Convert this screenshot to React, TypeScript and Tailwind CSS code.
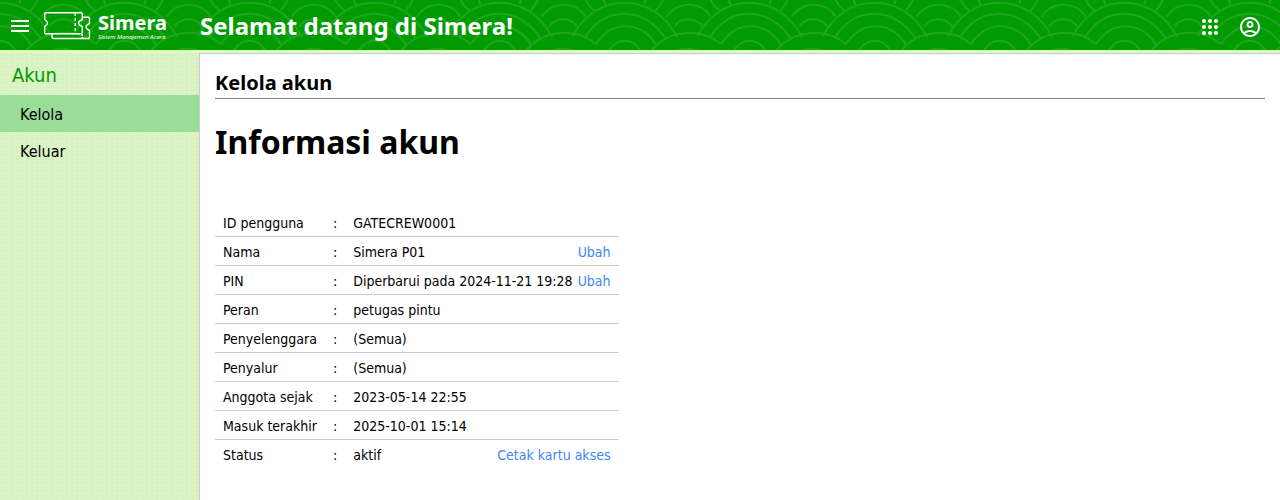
import { MdMenu, MdOutlineAccountCircle } from "react-icons/md";

type Row = { label: string; value: string; action?: string };

const rows: Row[] = [
  { label: "ID pengguna", value: "GATECREW0001" },
  { label: "Nama", value: "Simera P01", action: "Ubah" },
  { label: "PIN", value: "Diperbarui pada 2024-11-21 19:28", action: "Ubah" },
  { label: "Peran", value: "petugas pintu" },
  { label: "Penyelenggara", value: "(Semua)" },
  { label: "Penyalur", value: "(Semua)" },
  { label: "Anggota sejak", value: "2023-05-14 22:55" },
  { label: "Masuk terakhir", value: "2025-10-01 15:14" },
  { label: "Status", value: "aktif", action: "Cetak kartu akses" },
];

function WavePattern() {
  return (
    <svg className="absolute inset-0 h-full w-full" aria-hidden="true">
      <defs>
        <pattern id="waves" x="60" y="0" width="125" height="50" patternUnits="userSpaceOnUse">
          <g transform="translate(-20 0) scale(0.33333)" fill="none" stroke="#1fa51f" strokeWidth="6">
            <path d="M98 108C135 42 190 8 253 8S375 42 412 112" />
            <path d="M133 115C162 68 200 41 253 41S345 68 379 118" />
            <path d="M168 132C192 97 218 79 256 79S324 97 348 134" />
            <path d="M207 150Q226 122 254 122T301 150" />
            <path d="M135 -4Q146 20 165 32M190 -2L197 15M318 -2L313 12M371 -4Q358 20 347 32" />
            <path d="M5 50A79 79 0 0 1 137 50M380 50A79 79 0 0 1 512 50" />
            <path d="M28 80A51 51 0 0 1 112 80M403 80A51 51 0 0 1 487 80" />
            <path d="M-40 150A150 150 0 0 1 168 132M335 150A150 150 0 0 1 543 132" />
            <path d="M38 152Q66 140 100 152M413 152Q441 140 475 152" />
          </g>
        </pattern>
      </defs>
      <rect width="100%" height="100%" fill="url(#waves)" />
    </svg>
  );
}

function FabricTexture() {
  return (
    <svg className="absolute inset-0 h-full w-full" aria-hidden="true">
      <defs>
        <pattern id="fabric" width="5" height="4" patternUnits="userSpaceOnUse">
          <path d="M0 0h1v1h-1zM1 1h1v1h-1zM2 2h2v1h-2z" fill="#d5eebf" />
          <path d="M3 0h1v1h-1zM4 1h1v1h-1zM0 3h1v1h-1z" fill="#dff5cb" />
        </pattern>
      </defs>
      <rect width="100%" height="100%" fill="url(#fabric)" />
    </svg>
  );
}

function TicketLogo() {
  return (
    <svg width="48" height="30" viewBox="0 0 48 30" fill="none" stroke="#fff" strokeWidth="1.4" aria-hidden="true">
      <path d="M1.5 1.700H37Q38.300 1.700 38.300 3V8.500C36 9.500 34.500 10.500 34.500 12S36 14.500 38.300 15.500V21Q38.300 22.700 37 22.700H1.500Q.7 22.700 .7 21.500V15.500C2.500 14.500 3.500 13.500 3.500 12S2.500 9.500 .7 8.500V3Q.7 1.700 1.500 1.700Z" />
      <path d="M39 6.200H44.500Q45.500 6.200 45.500 7.500V12.500C43.500 13.500 42 14.500 42 16S43.500 18.500 45.500 19.500V25.500Q45.500 27.500 44.500 27.500H9.500Q8 27.500 8 26V23" />
      <path d="M31.200 2V22.500" strokeDasharray="3 2" />
      <path d="M38.300 23V27.500" strokeDasharray="2 1" />
    </svg>
  );
}

function AppsIcon() {
  return (
    <svg width="24" height="24" viewBox="0 0 24 24" fill="currentColor" aria-hidden="true">
      {[6, 12, 18].map((y) => [6, 12, 18].map((x) => <circle key={x + "-" + y} cx={x} cy={y} r="2" />))}
    </svg>
  );
}

export default function App() {
  return (
    <div className="flex min-h-screen flex-col bg-white font-['DejaVu_Sans_Condensed','Noto_Sans',sans-serif] text-black">
      <header className="relative h-[50px] bg-[#009b00] text-white">
        <WavePattern />
        <div className="relative flex h-full items-center pt-0.5">
          <div className="flex w-[200px] items-center">
            <button type="button" aria-label="Menu" className="flex size-10 items-center justify-center">
              <MdMenu size={24} />
            </button>
            <a href="#beranda" className="flex items-center gap-1 pl-1 font-['Noto_Sans',sans-serif]">
              <TicketLogo />
              <span className="flex flex-col pt-0.5 pl-0.5">
                <span className="text-[20px] leading-5 font-bold">Simera</span>
                <span className="text-[6px] leading-2 whitespace-nowrap italic">Sistem Manajemen Acara</span>
              </span>
            </a>
          </div>
          <p className="flex-1 font-['Noto_Sans',sans-serif] text-2xl font-bold">Selamat datang di Simera!</p>
          <div className="flex pt-0.5 pr-2.5">
            <button type="button" aria-label="Aplikasi" className="flex size-10 items-center justify-center">
              <AppsIcon />
            </button>
            <button type="button" aria-label="Akun" className="flex size-10 items-center justify-center">
              <MdOutlineAccountCircle size={24} />
            </button>
          </div>
        </div>
      </header>
      <div className="h-[3px] bg-[#dcffb9]" />
      <div className="flex flex-1">
        <nav className="relative w-[199px] shrink-0 bg-[#dbf2c5]">
          <FabricTexture />
          <div className="relative">
            <h2 className="px-3 pt-2 pb-1.5 text-[20px] leading-7 text-[#009b00]">Akun</h2>
            <a href="#kelola" className="block bg-[#99dd99] px-5 pt-[7px] pb-[5px] text-base leading-[25px]">Kelola</a>
            <a href="#keluar" className="block px-5 pt-[7px] pb-[5px] text-base leading-[25px]">Keluar</a>
          </div>
        </nav>
        <main className="min-w-0 flex-1 border-t border-l border-[#cccccc] px-[15px] pt-4">
          <h1 className="border-b border-[#808080] pb-0.5 font-['Noto_Sans',sans-serif] text-[20px] leading-[26px] font-bold">Kelola akun</h1>
          <h2 className="pt-[23px] font-['Noto_Sans',sans-serif] text-[32px] leading-10 font-bold">Informasi akun</h2>
          <table className="mt-[46px] border-collapse text-sm leading-5">
            <tbody>
              {rows.map((row) => (
                <tr key={row.label} className="border-b border-[#cccccc] last:border-b-0">
                  <th scope="row" className="px-2 pt-[5px] pb-[3px] text-left font-normal">{row.label}</th>
                  <td className="px-2 pt-[5px] pb-[3px]">:</td>
                  <td className="px-2 pt-[5px] pb-[3px]">
                    <div className="flex justify-between gap-[5px]">
                      <span>{row.value}</span>
                      {row.action && <a href="#ubah" className="text-[#4285f4]">{row.action}</a>}
                    </div>
                  </td>
                </tr>
              ))}
            </tbody>
          </table>
        </main>
      </div>
    </div>
  );
}
